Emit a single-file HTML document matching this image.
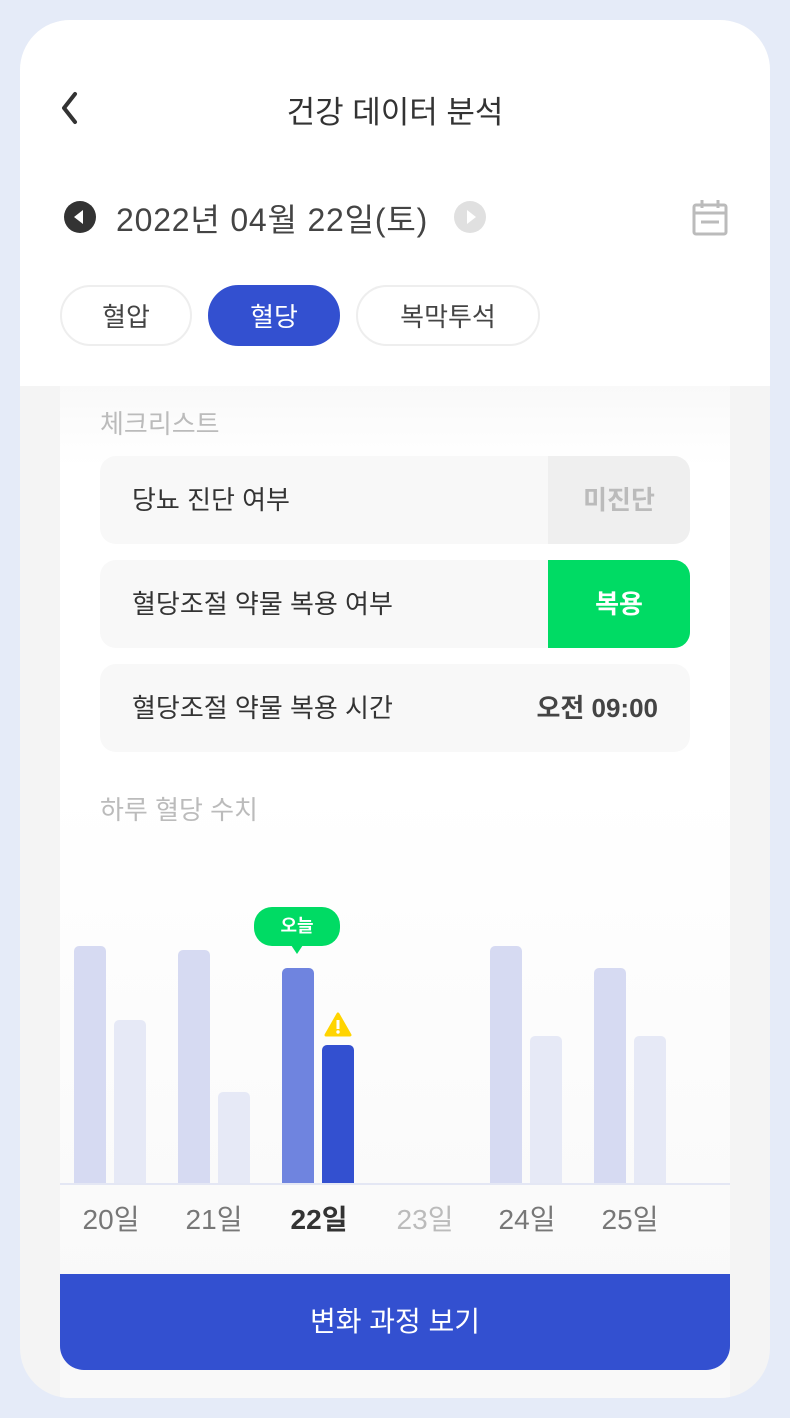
<!DOCTYPE html>
<html><head><meta charset="utf-8"><style>
*{margin:0;padding:0;box-sizing:border-box}
body{width:790px;height:1418px;background:#e5ebf8;font-family:"Liberation Sans","Noto Sans CJK KR",sans-serif;position:relative;overflow:hidden}
.phone{position:absolute;left:20px;top:20px;width:750px;height:1378px;background:#f4f4f4;border-radius:50px;overflow:hidden}
.a{position:absolute}
.hdr{left:0;top:0;width:750px;height:366px;background:#fff}
.t{white-space:nowrap}
.pill{position:absolute;top:265px;height:61px;border:2px solid #eee;border-radius:31px;font-size:26px;color:#444;display:flex;align-items:center;justify-content:center;background:#fff}
.card{left:40px;top:366px;width:670px;height:1012px;background:linear-gradient(#f9f9f9,#fff 80px,#fff 400px,#f9f9f9 900px)}
.row{position:absolute;left:40px;width:590px;height:88px;background:#f8f8f8;border-radius:16px;overflow:hidden;font-size:26px;color:#333}
.row .l{position:absolute;left:32px;top:0;line-height:88px}
.row .r{position:absolute;right:0;top:0;width:142px;height:88px;line-height:88px;text-align:center;font-weight:bold}
.bar{position:absolute;width:32px;bottom:0;border-radius:5px 5px 0 0}
.lab{position:absolute;top:1178px;width:100px;margin-left:-50px;text-align:center;font-size:28px;color:#777}
</style></head><body>
<div class="phone">
<div class="a hdr"></div>
<svg class="a" style="left:38px;top:70px" width="24" height="36"><path d="M17 4 L6 18 L17 32" stroke="#333" stroke-width="4" fill="none" stroke-linecap="round" stroke-linejoin="round"/></svg>
<div class="a t" style="left:0;width:750px;text-align:center;top:67px;font-size:31px;color:#333">건강 데이터 분석</div>
<svg class="a" style="left:42px;top:179px" width="36" height="36"><circle cx="18" cy="18" r="16" fill="#333"/><path d="M21 11 L12 18 L21 25Z" fill="#fff"/></svg>
<div class="a t" style="left:96px;top:175px;font-size:32px;letter-spacing:0.8px;color:#444">2022년 04월 22일(토)</div>
<svg class="a" style="left:432px;top:179px" width="36" height="36"><circle cx="18" cy="18" r="16" fill="#e0e0e0"/><path d="M15 11 L24 18 L15 25Z" fill="#fff"/></svg>
<svg class="a" style="left:672px;top:180px" width="36" height="36"><rect x="2" y="5" width="32" height="29" rx="2" fill="none" stroke="#bbb" stroke-width="3"/><line x1="2" y1="13" x2="34" y2="13" stroke="#bbb" stroke-width="3"/><line x1="10" y1="0" x2="10" y2="8" stroke="#bbb" stroke-width="3"/><line x1="26" y1="0" x2="26" y2="8" stroke="#bbb" stroke-width="3"/><line x1="9" y1="22" x2="27" y2="22" stroke="#bbb" stroke-width="3"/></svg>
<div class="pill" style="left:40px;width:132px">혈압</div>
<div class="pill" style="left:188px;width:132px;background:#3350d0;border-color:#3350d0;color:#fff">혈당</div>
<div class="pill" style="left:336px;width:184px">복막투석</div>
<div class="a card">
<div class="a t" style="left:40px;top:18px;font-size:26px;color:#bbb">체크리스트</div>
<div class="row" style="top:70px"><div class="l">당뇨 진단 여부</div><div class="r" style="background:#efefef;color:#bbb">미진단</div></div>
<div class="row" style="top:174px"><div class="l">혈당조절 약물 복용 여부</div><div class="r" style="background:#00db64;color:#fff">복용</div></div>
<div class="row" style="top:278px"><div class="l">혈당조절 약물 복용 시간</div><div class="r" style="width:auto;right:32px;color:#444">오전 09:00</div></div>
<div class="a t" style="left:40px;top:404px;font-size:26px;color:#bbb">하루 혈당 수치</div>
</div>
<div class="a" style="left:40px;top:540px;width:670px;height:624px">
<div class="bar" style="left:14px;height:238px;background:#d6daf2"></div>
<div class="bar" style="left:54px;height:164px;background:#e6e9f6"></div>
<div class="bar" style="left:118px;height:234px;background:#d6daf2"></div>
<div class="bar" style="left:158px;height:92px;background:#e6e9f6"></div>
<div class="bar" style="left:222px;height:216px;background:#6f84df"></div>
<div class="bar" style="left:262px;height:139px;background:#3350d0"></div>
<div class="bar" style="left:430px;height:238px;background:#d6daf2"></div>
<div class="bar" style="left:470px;height:148px;background:#e6e9f6"></div>
<div class="bar" style="left:534px;height:216px;background:#d6daf2"></div>
<div class="bar" style="left:574px;height:148px;background:#e6e9f6"></div>
</div>
<div class="a" style="left:40px;top:1163px;width:670px;height:2px;background:#e4e7f4"></div>
<div class="a" style="left:234px;top:887px;width:86px;height:39px;border-radius:18px;background:#00db64;color:#fff;font-size:18px;font-weight:bold;text-align:center;line-height:39px">오늘</div>
<svg class="a" style="left:271px;top:925px" width="12" height="10"><path d="M0 0 L12 0 L6 9Z" fill="#00db64"/></svg>
<svg class="a" style="left:304px;top:992px" width="28" height="26"><path d="M14 2 L26 23 L2 23Z" fill="#ffd400" stroke="#ffd400" stroke-width="3" stroke-linejoin="round"/><rect x="12.5" y="8" width="3" height="9" fill="#fff"/><circle cx="14" cy="20" r="1.7" fill="#fff"/></svg>
<div class="lab" style="left:91px">20일</div>
<div class="lab" style="left:194px">21일</div>
<div class="lab" style="left:299px;font-weight:bold;color:#333">22일</div>
<div class="lab" style="left:405px;color:#bbb">23일</div>
<div class="lab" style="left:507px">24일</div>
<div class="lab" style="left:610px">25일</div>
<div class="a" style="left:40px;top:1254px;width:670px;height:96px;background:#3350d0;border-radius:0 0 24px 24px;color:#fff;font-size:28px;text-align:center;line-height:96px">변화 과정 보기</div>
</div>
</body></html>
